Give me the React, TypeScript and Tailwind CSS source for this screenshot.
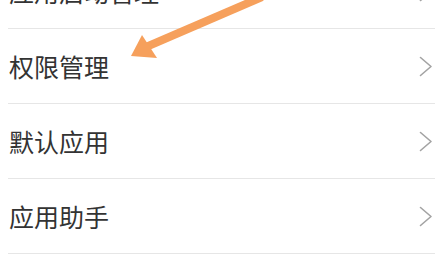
import React from "react";

const items = ["应用启动管理", "权限管理", "默认应用", "应用助手", ""];

function Chevron() {
  return (
    <svg width="14" height="21" viewBox="0 0 14 21" className="shrink-0">
      <polyline points="1.5,1.5 12,10.5 1.5,19.5" fill="none" stroke="#a3a3a3" strokeWidth="1.6" strokeLinecap="round" strokeLinejoin="round" />
    </svg>
  );
}

export default function App() {
  return (
    <div className="relative w-[448px] h-[271px] overflow-hidden bg-white" style={{ fontFamily: '"Noto Sans CJK SC", "Noto Sans", sans-serif' }}>
      <div className="mt-[-46px] ml-[8px] mr-[13px] flex flex-col">
        {items.map((label, i) => (
          <div key={i} className="h-[75px] flex items-center justify-between border-b border-[#e6e6e6] pl-[1px] pr-[2px]">
            <span className="text-[25px] leading-none text-[#333333]">{label}</span>
            {label && <Chevron />}
          </div>
        ))}
      </div>
      <svg className="absolute inset-0 pointer-events-none" width="448" height="271" viewBox="0 0 448 271">
        <line x1="262" y1="-3" x2="146" y2="47" stroke="#f6a05c" strokeWidth="8" strokeLinecap="butt" />
        <polygon points="131,56 142,35 157,58" fill="#f6a05c" />
      </svg>
    </div>
  );
}
